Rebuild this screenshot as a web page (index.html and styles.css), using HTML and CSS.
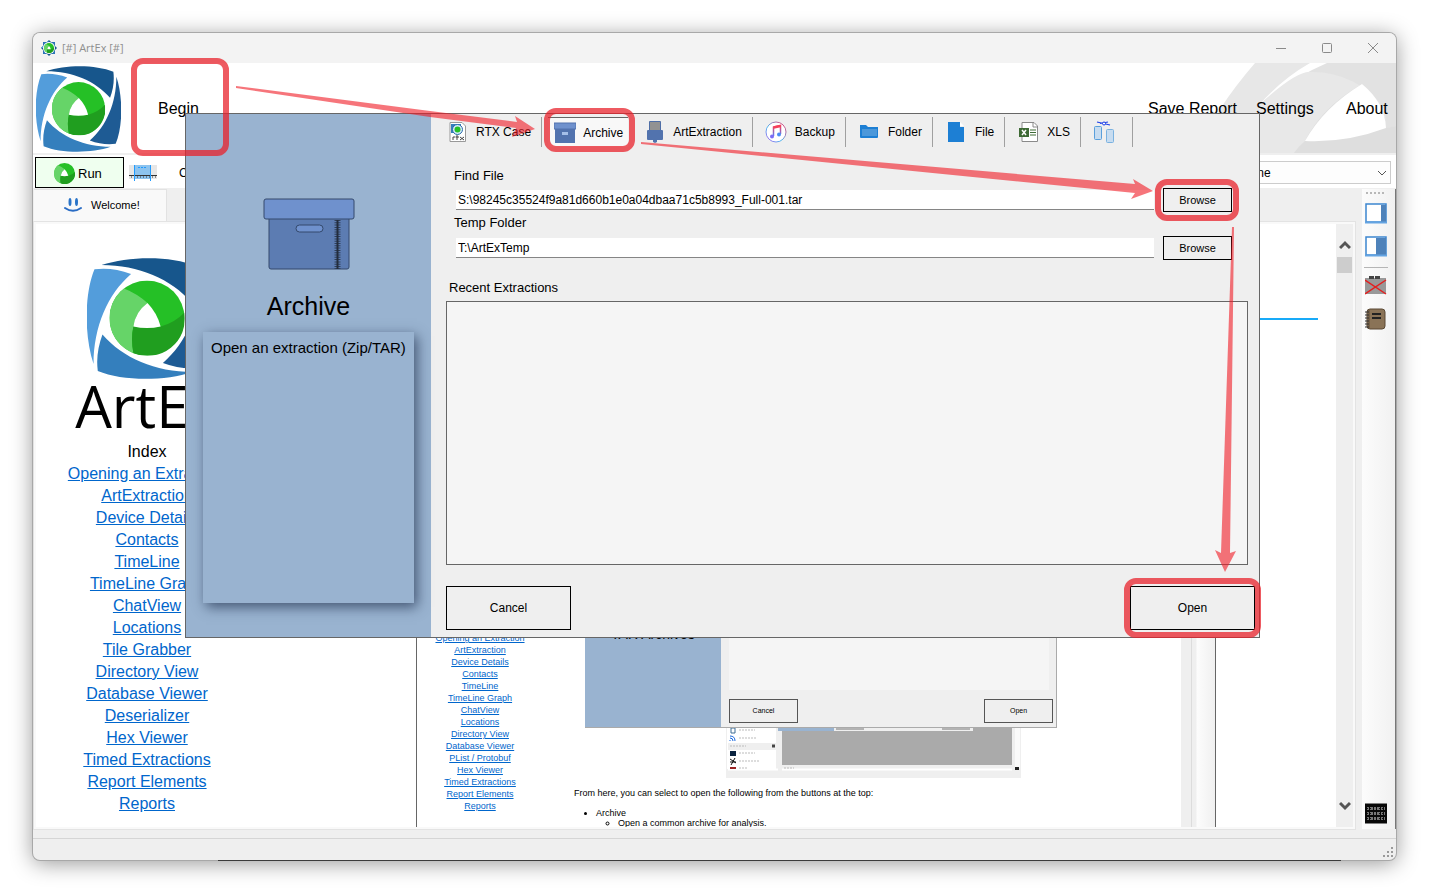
FILE: index.html
```html
<!DOCTYPE html>
<html lang="en">
<head>
<meta charset="utf-8">
<title>ArtEx</title>
<link rel="stylesheet" href="styles.css">
</head>
<body>
<svg class="defs" aria-hidden="true">
  <symbol id="ball" viewBox="48 48 160 160">
    <circle cx="128" cy="128" r="80" fill="#25c026"/>
    <path d="M79 65Q107 76 129 96Q103 115 99 146Q93 172 99 203A80 80 0 0 1 79 65Z" fill="#66d468"/>
    <path d="M99 203Q93 172 99 146Q128 153 157 146Q187 138 208 116A80 80 0 0 1 99 203Z" fill="#209e1f"/>
    <path d="M129 96Q103 115 99 146Q128 153 157 146Q150 118 129 96Z" fill="#fff"/>
  </symbol>
  <symbol id="logo" viewBox="0 0 256 258">
    <path d="M31 15C90-5 180-5 233 17Q238 55 223 95C180 45 110 15 31 15Z" fill="#17568c"/>
    <path d="M31 15C90-5 180-5 233 17Q238 55 223 95C180 45 110 15 31 15Z" fill="#1e5b94" transform="rotate(90 128 129)"/>
    <path d="M31 15C90-5 180-5 233 17Q238 55 223 95C180 45 110 15 31 15Z" fill="#347fbd" transform="rotate(180 128 129)"/>
    <path d="M31 15C90-5 180-5 233 17Q238 55 223 95C180 45 110 15 31 15Z" fill="#539ddb" transform="rotate(270 128 129)"/>
    <use href="#ball" x="48" y="48" width="160" height="160"/>
  </symbol>
</svg>

<div class="window">
  <header class="titlebar">
    <svg class="titlebar-icon" viewBox="0 0 16 16"><path d="M2 2H14V14H2Z" fill="#2b73b5"/><path d="M8 0L16 8L8 16L0 8Z" fill="#17568c"/><path d="M0 8L8 0L6 5L3 8Z" fill="#539ddb"/><circle cx="8" cy="8" r="6" fill="#fff"/><use href="#ball" x="3" y="3" width="10" height="10"/></svg>
    <span class="titlebar-text">[#] ArtEx [#]</span>
    <button class="win-btn" aria-label="Minimize"><svg viewBox="0 0 12 12"><path d="M1 6.500H11"/></svg></button>
    <button class="win-btn" aria-label="Maximize"><svg viewBox="0 0 12 12"><rect x="1.500" y="1.500" width="9" height="9" rx="1"/></svg></button>
    <button class="win-btn" aria-label="Close"><svg viewBox="0 0 12 12"><path d="M1 1L11 11M11 1L1 11"/></svg></button>
  </header>

  <div class="ribbon">
    <svg class="swoosh" viewBox="0 0 200 90" preserveAspectRatio="none">
      <path d="M59 0H114Q86 16 64 41V90H0Q20 45 59 0Z" fill="#e7e7e7"/>
      <path d="M131 0H200V90H64V41Q92 17 131 0Z" fill="#e2e2e2"/>
      <path d="M64 41Q100 8 114 9Q160 8 189 47L190 65L200 63V90H64Z" fill="#e8e8e8"/>
      <path d="M64 90H0V60H64Z" fill="#e7e7e7"/>
      <path d="M166 21Q126 44 109 78Q102 84 98 90H200V63L190 65L189 55Z" fill="#dedede"/>
      <path d="M166 21Q189 40 190 65Q150 80 109 78Q128 44 166 21Z" fill="#fff"/>
    </svg>
    <svg class="ribbon-logo"><use href="#logo"/></svg>
    <button class="menu begin">Begin</button>
    <nav class="ribbon-nav">
      <button class="menu">Save Report</button>
      <button class="menu">Settings</button>
      <button class="menu">About</button>
    </nav>
  </div>

  <div class="toolbar">
    <button class="run"><svg width="21" height="21"><use href="#ball"/></svg>Run</button>
    <svg class="range" viewBox="0 0 28 16"><path d="M0 0H28V14H0Z" fill="#e6e6e6"/><path d="M6 0H21V14H6Z" fill="#8dc3ee"/><path d="M0 10.500H28" stroke="#333"/><path d="M2 12H27" stroke="#333" stroke-dasharray="1 2"/><path d="M5.500 0V16M21.500 0V16" stroke="#1f9bff"/><path d="M9 2.500H18" stroke="#1f9bff" stroke-dasharray="2 1"/></svg>
    <span class="toolbar-text">C</span>
    <select class="filter" aria-label="Filter"><option>None</option></select>
  </div>

  <div class="workspace">
    <main class="tabs">
      <div class="tabstrip">
        <button class="tab"><svg viewBox="0 0 18 14" width="18" height="14"><ellipse cx="6" cy="4" rx="1.500" ry="4" fill="#2a74c8"/><ellipse cx="12.500" cy="4" rx="1.500" ry="4" fill="#2a74c8"/><path d="M1 10Q9 15.500 17 10" fill="none" stroke="#2a6cc4" stroke-width="2" stroke-linecap="round"/></svg>Welcome!</button>
      </div>
      <div class="page">
        <nav class="index">
          <svg class="index-logo"><use href="#logo"/></svg>
          <div class="brand">ArtEx</div>
          <div>Index</div>
          <a href="#">Opening an Extraction</a>
          <a href="#">ArtExtraction</a>
          <a href="#">Device Details</a>
          <a href="#">Contacts</a>
          <a href="#">TimeLine</a>
          <a href="#">TimeLine Graph</a>
          <a href="#">ChatView</a>
          <a href="#">Locations</a>
          <a href="#">Tile Grabber</a>
          <a href="#">Directory View</a>
          <a href="#">Database Viewer</a>
          <a href="#">Deserializer</a>
          <a href="#">Hex Viewer</a>
          <a href="#">Timed Extractions</a>
          <a href="#">Report Elements</a>
          <a href="#">Reports</a>
        </nav>
        <article class="article">
          <hr class="rule">
          <div class="shot">
            <nav class="shot-index">
              <a href="#">Opening an Extraction</a>
              <a href="#">ArtExtraction</a>
              <a href="#">Device Details</a>
              <a href="#">Contacts</a>
              <a href="#">TimeLine</a>
              <a href="#">TimeLine Graph</a>
              <a href="#">ChatView</a>
              <a href="#">Locations</a>
              <a href="#">Directory View</a>
              <a href="#">Database Viewer</a>
              <a href="#">PList / Protobuf</a>
              <a href="#">Hex Viewer</a>
              <a href="#">Timed Extractions</a>
              <a href="#">Report Elements</a>
              <a href="#">Reports</a>
            </nav>
            <div class="shot-body">
              <div class="mini">
                <div class="mini-side">TAR Archives</div>
                <div class="mini-main">
                  <div class="mini-list"></div>
                  <div class="mini-foot"><button>Cancel</button><button>Open</button></div>
                </div>
              </div>
              <svg class="tiny" viewBox="0 0 295 50">
                <path d="M0 0H295V50H0Z" fill="#efefef"/><path d="M1 0H50V41H1Z" fill="#fff"/><path d="M2 15H50V22H2Z" fill="#efefef"/><path d="M56 0H286V37H56Z" fill="#aaa"/><path d="M52 0H108V3H52Z" fill="#99b3d0"/><path d="M108 0H247V3H108Z" fill="#efefef"/><path d="M110 1H138M216 1H244" stroke="#777" stroke-width="1"/><path d="M2 41.500H52M56 41.500H286" stroke="#fff" stroke-width="2"/>
                <path d="M5 0H9V5H5Z" fill="#fff" stroke="#3c6d95"/><path d="M4 13V12M4 10Q7 10 7 13M4 8Q9 8 9 13" fill="none" stroke="#1767e0"/><path d="M4 23H10V28H4Z" fill="#0b2440"/><path d="M4 31L10 35M9 30L5 37M4 34H10" stroke="#111" stroke-width="1"/><path d="M4 39H10V41H4Z" fill="#922"/>
                <path d="M13 2H29M13 10H30M4 18H20M13 25H29M13 33H33M13 40H21M58 40H68" stroke="#bbb" stroke-dasharray="2 1"/><path d="M46 18H49" stroke="#444" stroke-width="3"/><path d="M289 0H294V40H289Z" fill="#fafafa"/><path d="M289 39H293V42H289Z" fill="#222"/>
              </svg>
              <p class="shot-text">From here, you can select to open the following from the buttons at the top:</p>
              <ul class="shot-text">
                <li>Archive<ul><li>Open a common archive for analysis.</li></ul></li>
              </ul>
            </div>
            <div class="shot-scroll"></div>
          </div>
        </article>
        <div class="scrollbar">
          <svg viewBox="0 0 12 10" width="12" height="10"><path d="M1 8L6 3L11 8"/></svg>
          <div class="thumb"></div>
          <svg class="down" viewBox="0 0 12 10" width="12" height="10"><path d="M1 2L6 7L11 2"/></svg>
        </div>
      </div>
    </main>
    <aside class="sidebar">
      <div class="grip"></div>
      <button class="tool" aria-label="Narrow panel"><svg viewBox="0 0 22 21"><rect x="1" y="1" width="20" height="18" fill="#fff" stroke="#3d86cf" stroke-width="1.500"/><path d="M16 2H21V19H16Z" fill="#4e82ba"/><path d="M0 19.500H22" stroke="#64a4e2" stroke-width="2"/></svg></button>
      <button class="tool" aria-label="Wide panel"><svg viewBox="0 0 22 21"><rect x="1" y="1" width="20" height="18" fill="#fff" stroke="#3d86cf" stroke-width="1.500"/><path d="M11 2H21V19H11Z" fill="#4e82ba"/><path d="M0 19.500H22" stroke="#64a4e2" stroke-width="2"/></svg></button>
      <hr>
      <button class="tool" aria-label="Clear"><svg viewBox="0 0 22 21"><path d="M0 3H21V19H0Z" fill="#999"/><path d="M4 2.500H16" stroke="#444" stroke-width="3" stroke-dasharray="5 1"/><path d="M0 5L21 19M21 5L0 19" stroke="#e32020" stroke-width="1.500"/></svg></button>
      <button class="tool book" aria-label="Notes"><svg viewBox="0 0 22 22"><rect x="2" y="1" width="18" height="20" rx="3" fill="#8a7357" stroke="#5a4935"/><path d="M4 2V20" stroke="#5f4c36" stroke-width="1"/><path d="M7 6H16M7 10H16" stroke="#222" stroke-width="2"/><path d="M0 4H4M0 7H4M0 10H4M0 13H4M0 16H4M0 19H4" stroke="#333"/></svg></button>
      <button class="tool last" aria-label="Hex"><svg viewBox="0 0 22 20"><path d="M0 0H22V20H0Z" fill="#080808"/><path d="M2 5H20M2 10H20M2 15H20" stroke="#777" stroke-width="3" stroke-dasharray="2 1 3 1"/><path d="M2 5H20M2 10H20M2 15H20" stroke="#111" stroke-dasharray="1 2"/></svg></button>
    </aside>
  </div>
  <footer class="status"><svg viewBox="0 0 12 12" width="12" height="12"><path d="M9 1h2v2H9zM5 5h2v2H5zM9 5h2v2H9zM1 9h2v2H1zM5 9h2v2H5zM9 9h2v2H9z" fill="#9a9a9a"/></svg></footer>

  <section class="dialog" role="dialog" aria-label="Archive">
    <div class="side">
      <svg class="box" viewBox="0 0 92 72"><rect x="6" y="15" width="80" height="56" rx="2" fill="#5c7cb2" stroke="#34496c"/><rect x="1" y="1" width="90" height="20" rx="2" fill="#6f91cd" stroke="#34496c"/><rect x="33" y="27" width="27" height="7" rx="3.500" fill="#6f91cd" stroke="#34496c"/><path d="M74.500 22V71" stroke="#222c3d" stroke-width="6" stroke-dasharray="1 1.300" opacity=".75"/><path d="M74.500 22V71" stroke="#222c3d" stroke-width="2"/></svg>
      <h1>Archive</h1>
      <div class="info">Open an extraction (Zip/TAR)</div>
    </div>
    <div class="form">
      <div class="sources">
        <button><svg viewBox="0 0 22 22"><path d="M3 1.500H15L18.500 5V20.500H3Z" fill="#fff" stroke="#999"/><path d="M4 3H14V12H4Z" fill="#347fbd"/><circle cx="10.500" cy="8.500" r="5" fill="#d6ecfa" stroke="#2a6ba8"/><circle cx="10.500" cy="8.500" r="3" fill="#25c026"/><path d="M6 19V16H8M10 14V19M8.500 16H12M13 16L17 19M17 16L13 19" fill="none" stroke="#444"/></svg>RTX Case</button>
        <button class="on"><svg viewBox="0 0 22 22"><path d="M1 6H21V21H1Z" fill="#5273ae"/><path d="M0 1H22V7H0Z" fill="#6f91cd" stroke="#5273ae"/><path d="M8 10H14V13H8Z" fill="#a5bfe8"/></svg>Archive</button>
        <button><svg viewBox="0 0 22 22"><path d="M5.500.500H16.500V10H5.500Z" fill="#929292" stroke="#4e6ea6"/><rect x="3" y="9" width="16" height="10" rx="1" fill="#5273ae"/><path d="M9 19H13V21L11 22L9 21Z" fill="#5273ae"/></svg>ArtExtraction</button>
        <button class="wide"><svg viewBox="0 0 22 22"><defs><linearGradient id="g" x1="0" y1="1" x2="1" y2="0"><stop offset="0" stop-color="#b45cf0"/><stop offset=".4" stop-color="#50b8f0"/><stop offset="1" stop-color="#f03c70"/></linearGradient><linearGradient id="n" x2="0" y2="1"><stop offset="0" stop-color="#f5405c"/><stop offset="1" stop-color="#5b7cf5"/></linearGradient></defs><circle cx="11" cy="11" r="10" fill="#fff" stroke="url(#g)"/><path d="M8.500 15V6L15.500 4.500V13" fill="none" stroke="url(#n)" stroke-width="1.500"/><path d="M8.500 6.500L15.500 5" stroke="#f5405c" stroke-width="2.500"/><circle cx="7" cy="15.500" r="2" fill="#7c6cf5"/><circle cx="14" cy="13.500" r="2" fill="#4b8cf5"/></svg>Backup</button>
        <button class="wide"><svg viewBox="0 0 22 22"><path d="M2 4H8L10 6H20V16Q20 17 19 17H3Q2 17 2 16Z" fill="#1d7fd4"/><path d="M4 8H19V15H4Z" fill="#4c98da"/></svg>Folder</button>
        <button class="wide"><svg viewBox="0 0 22 22"><path d="M3 1H15V6H19V21H3Z" fill="#1d7fd4"/><path d="M15 1L19 5H15Z" fill="#fff"/></svg>File</button>
        <button class="wide"><svg viewBox="0 0 22 22"><path d="M5 1.500H17L20.500 5V20.500H5Z" fill="#fff" stroke="#8a8a8a"/><path d="M16 2V6H20" fill="none" stroke="#8a8a8a"/><path d="M13 9H19M13 11.500H19M13 14H19" stroke="#3e6a35"/><path d="M2 7H12V16H2Z" fill="#3e6a35"/><path d="M5 9L9 14M9 9L5 14" stroke="#fff" stroke-width="1.500"/></svg>XLS</button>
        <button class="bare" aria-label="Devices"><svg viewBox="0 0 22 22"><rect x="1.500" y="5.500" width="7" height="13" rx="1" fill="#c7dcf0" stroke="#5a9fdb"/><rect x="13.500" y="8.500" width="7" height="13" rx="1" fill="#c7dcf0" stroke="#7bb2e0"/><path d="M4 1L17 4M7 2.500L15 1" stroke="#1c3fe8" stroke-width="1.200"/><circle cx="11" cy="2.500" r="1.500" fill="#fff" stroke="#1c3fe8"/></svg></button>
      </div>
      <label class="cap" for="file">Find File</label>
      <div class="row"><input id="file" value="S:\98245c35524f9a81d660b1e0a04dbaa71c5b8993_Full-001.tar"><button>Browse</button></div>
      <label class="cap second" for="temp">Temp Folder</label>
      <div class="row"><input id="temp" value="T:\ArtExTemp"><button>Browse</button></div>
      <div class="recent-cap">Recent Extractions</div>
      <div class="recent"></div>
      <div class="actions"><button>Cancel</button><button>Open</button></div>
    </div>
  </section>
</div>

<svg class="marks" viewBox="0 0 1429 893" width="1429" height="893" aria-hidden="true">
  <g fill="none" stroke="#e8202a" stroke-opacity=".74" stroke-width="6">
    <rect x="134" y="61" width="92" height="92" rx="9"/>
    <rect x="547" y="111" width="85" height="38" rx="9"/>
    <rect x="1158" y="182" width="78" height="36" rx="9"/>
    <rect x="1127" y="581" width="131" height="54" rx="9"/>
  </g>
  <g fill="#f01923" fill-opacity=".6">
    <path d="M236 86L430 111L517 122L515 116L535 129L512 137L516 128L430 117L236 88Z"/>
    <path d="M641 142L1135 184L1133 179L1153 191L1131 199L1135 193L641 144Z"/>
    <path d="M1232 227H1234L1230 553L1236 551L1225 572L1215 550L1221 553Z"/>
  </g>
</svg>
</body>
</html>
```
FILE: styles.css
```css
* { box-sizing: border-box; }
body {
  margin: 0;
  padding: 33px;
  height: 100vh;
  overflow: hidden;
  position: relative;
  background: #fff;
  color: #000;
  font: 12px/16px "Liberation Sans", Arial, sans-serif;
}
button, input, select { font: inherit; color: inherit; }
button { background: none; border: 0; padding: 0; }
a { color: #0066cc; }
svg { display: block; flex: none; }
.defs { position: absolute; width: 0; height: 0; }

.window {
  position: relative;
  display: flex;
  flex-direction: column;
  height: 100%;
  background: #efefef;
  border-radius: 7px;
  box-shadow: 0 0 0 1px #a8a8a8, 0 3px 22px rgba(0, 0, 0, .42);
}
.window::after {
  content: "";
  position: absolute;
  left: 185px;
  right: 55px;
  bottom: -1px;
  height: 1px;
  background: #3c3c3c;
}
.titlebar {
  display: flex;
  align-items: center;
  height: 30px;
  flex: none;
  padding-left: 8px;
  background: #f3f3f3;
  border-radius: 7px 7px 0 0;
}
.titlebar-icon { width: 16px; height: 16px; }
.titlebar-text {
  flex: 1;
  padding-left: 5px;
  color: #8f8f8f;
  font: 11px/16px "Open Sans", sans-serif;
}
.win-btn { width: 46px; height: 30px; display: grid; place-items: center; }
.win-btn svg { width: 12px; height: 12px; fill: none; stroke: #8a8a8a; }

.ribbon {
  position: relative;
  display: flex;
  flex: none;
  height: 92px;
  padding: 3px 7px 0 3px;
  background: #fff;
  border-bottom: 2px solid #efefef;
}
.swoosh { position: absolute; right: 0; top: 0; width: 200px; height: 90px; }
.ribbon-logo { width: 85px; height: 86px; }
.menu { position: relative; height: 86px; font-size: 16px; line-height: 20px; text-align: left; white-space: nowrap; }
.begin { margin-left: 37px; }
.ribbon-nav { margin-left: auto; display: grid; grid-template-columns: 108px 90px 43px; }

.toolbar {
  display: flex;
  align-items: center;
  flex: none;
  height: 33px;
  padding: 2px 5px 0 2px;
  background: #fff;
}
.run {
  display: flex;
  align-items: center;
  gap: 3px;
  width: 89px;
  height: 31px;
  padding: 2px 0 0 18px;
  font-size: 13px;
  background: #efffef;
  border: 1px solid #000;
}
.range { width: 28px; height: 16px; margin-left: 5px; }
.toolbar-text { margin-left: 22px; }
.filter {
  margin-left: auto;
  width: 220px;
  height: 23px;
  padding: 0 0 0 70px;
  appearance: none;
  border: 1px solid #ccc;
  border-radius: 0;
  background: #fdfdfd url("data:image/svg+xml,%3Csvg xmlns='http://www.w3.org/2000/svg' width='10' height='6'%3E%3Cpath d='M1 1l4 4 4-4' fill='none' stroke='%23555'/%3E%3C/svg%3E") no-repeat right 3px center;
}

.workspace { display: flex; flex: 1; min-height: 0; padding-top: 1px; }
.tabs { display: flex; flex-direction: column; flex: 1; min-width: 0; padding-left: 1px; }
.tabstrip { display: flex; height: 33px; flex: none; }
.tab {
  display: flex;
  align-items: center;
  gap: 9px;
  width: 133px;
  padding: 0 0 2px 30px;
  font-size: 11px;
  background: #f9f9f9;
  border: solid #e2e2e2;
  border-width: 1px 1px 0 0;
}
.page {
  display: flex;
  flex: 1;
  min-height: 0;
  background: #fff;
  border: 2px solid #f9f9f9;
  outline: 1px solid #e3e3e3;
  overflow: hidden;
}
.index {
  display: flex;
  flex-direction: column;
  align-items: center;
  width: 222px;
  flex: none;
  padding-top: 34px;
  font-size: 16px;
  line-height: 22px;
}
.index-logo { width: 120px; height: 121px; }
.brand { margin-bottom: 8px; font: 58px/54px "Open Sans", sans-serif; }
.article { flex: 1; min-width: 0; padding-top: 94px; }
.rule { height: 2px; margin: 0 18px 20px 158px; border: 0; background: #18aaf8; }
.shot {
  display: flex;
  height: 600px;
  margin: 0 120px 0 158px;
  border: solid #666;
  border-width: 0 1px;
}
.shot-index {
  display: flex;
  flex-direction: column;
  align-items: center;
  width: 126px;
  flex: none;
  padding-top: 292px;
  font-size: 9px;
  line-height: 12px;
}
.shot-body { flex: 1; min-width: 0; padding-left: 31px; }
.mini {
  display: flex;
  width: 472px;
  height: 388px;
  margin-left: 11px;
  background: #efefef;
  border: solid #aaa;
  border-width: 0 1px 1px 0;
}
.mini-side {
  width: 136px;
  padding-top: 286px;
  background: #99b3d0;
  font-size: 14px;
  text-align: center;
}
.mini-main { flex: 1; display: flex; flex-direction: column; padding: 0 3px 4px 8px; }
.mini-list { flex: 1; margin: 0 4px 9px 0; background: #f5f5f5; }
.mini-foot { display: flex; justify-content: space-between; }
.mini-foot button { width: 69px; height: 24px; border: 1px solid #555; font-size: 7px; line-height: 8px; }
.tiny { width: 295px; height: 50px; margin-left: 152px; }
.shot-text { margin: 10px 0 0; font-size: 9px; line-height: 10px; }
.shot-text ul { padding-left: 22px; }
ul.shot-text { padding-left: 22px; }
.shot-scroll {
  width: 34px;
  border-left: 10px solid #efefef;
  background: linear-gradient(90deg, #dcdcdc 0 1px, #efefef 1px 5px, #fcfcfc 6px, #f0f0f0);
}
.scrollbar {
  display: flex;
  flex-direction: column;
  align-items: center;
  width: 17px;
  flex: none;
  padding: 16px 0;
  background: #efefef;
}
.scrollbar svg { fill: none; stroke: #555; stroke-width: 3; }
.thumb { width: 15px; height: 16px; margin-top: 7px; background: #cdcdcd; }
.down { margin-top: auto; }

.sidebar {
  display: flex;
  flex-direction: column;
  width: 34px;
  flex: none;
  margin-left: 7px;
  padding: 3px 8px 5px 3px;
  background: linear-gradient(90deg, #fcfcfc, #f1f1f1);
  border-right: 1px solid #777;
}
.grip { width: 19px; height: 2px; margin: 0 0 9px 1px; background: repeating-linear-gradient(90deg, #b8b8b8 0 2px, transparent 2px 4px); }
.tool { margin-bottom: 12px; }
.tool svg { width: 22px; height: 21px; }
.sidebar hr { width: 24px; height: 1px; margin: -2px 0 7px -1px; border: 0; background: #b5b5b5; }
.book svg { height: 22px; }
.last { margin: auto 0 0; }

.status {
  display: flex;
  justify-content: flex-end;
  align-items: flex-end;
  flex: none;
  height: 22px;
  margin-top: 9px;
  padding: 0 2px 2px;
  border-top: 1px solid #d5d5d5;
}

.dialog {
  position: absolute;
  left: 152px;
  right: 136px;
  top: 80px;
  height: 525px;
  display: flex;
  background: #efefef;
  border: 1px solid #666;
}
.side {
  display: flex;
  flex-direction: column;
  align-items: center;
  width: 245px;
  flex: none;
  padding: 84px 17px 34px;
  background: #99b3d0;
}
.box { width: 92px; height: 72px; }
h1 { margin: 20px 0 10px; font-size: 25px; line-height: 32px; font-weight: 400; }
.info {
  flex: 1;
  align-self: stretch;
  padding: 8px;
  font-size: 15px;
  white-space: nowrap;
  box-shadow: 3px 4px 12px rgba(30, 45, 75, .7);
}
.form { display: flex; flex-direction: column; flex: 1; min-width: 0; padding-bottom: 7px; }
.sources { display: flex; height: 34px; padding: 3px 0 1px 4px; }
.sources button {
  display: flex;
  align-items: center;
  gap: 7px;
  padding: 0 10px 0 12px;
  border-right: 1px solid #a0a0a0;
  white-space: nowrap;
}
.sources svg { width: 22px; height: 22px; }
.sources .on {
  margin: 0 4px 0 6px;
  padding: 0 5px 0 6px;
  background: #f8f8f8;
  border: 0;
  border-top: 1px solid #666;
}
.sources .wide { gap: 8px; }
.sources .bare { width: 52px; }
.cap { margin: 20px 0 4px 23px; font-size: 13px; }
.cap.second { margin: 3px 0 5px 23px; }
.row { display: flex; align-items: center; gap: 9px; padding: 0 27px 0 25px; }
.row input {
  flex: 1;
  min-width: 0;
  height: 20px;
  padding: 1px 2px 0;
  background: #fff;
  border: 0;
  border-bottom: 1px solid #858585;
}
.row button { width: 69px; height: 24px; border: 1px solid #000; font-size: 11px; }
.recent-cap { margin: 20px 0 5px 18px; font-size: 13px; }
.recent { flex: 1; margin: 0 11px 21px 15px; background: #f5f5f5; border: 1px solid #666; }
.actions { display: flex; justify-content: space-between; padding: 0 4px 0 15px; }
.actions button { width: 125px; height: 44px; border: 1px solid #000; }

.marks { position: absolute; left: 0; top: 0; }
```
